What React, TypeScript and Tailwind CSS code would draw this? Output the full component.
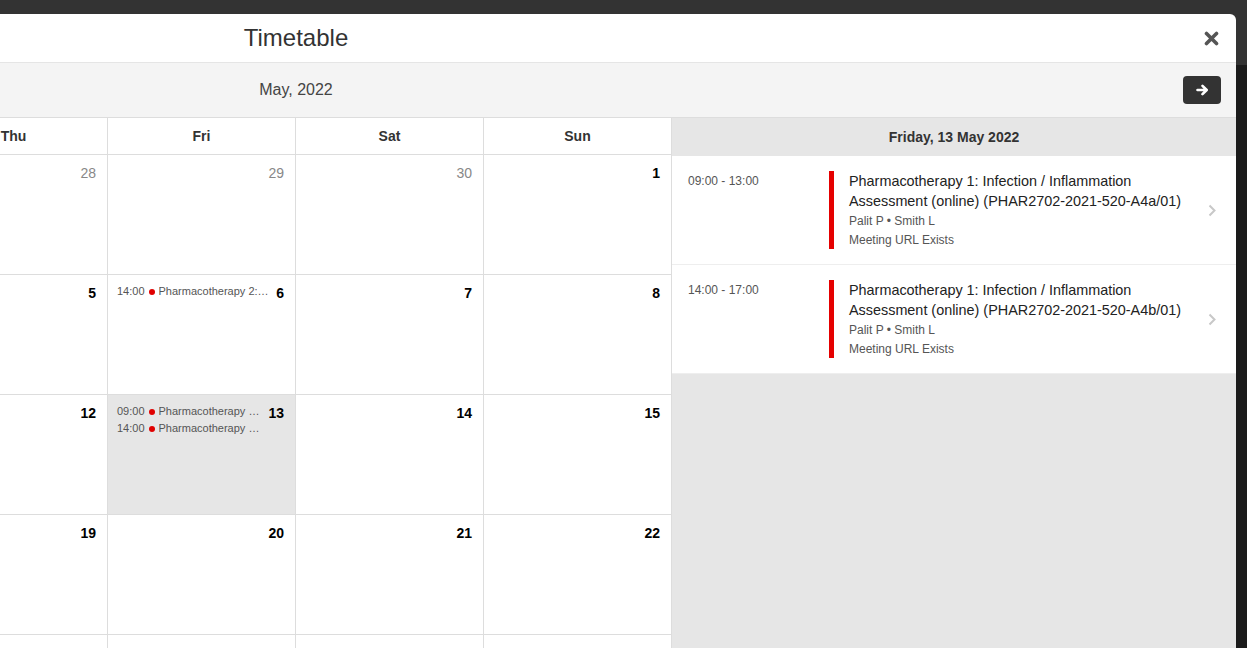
import React from "react";

type Ev = { t: string; name: string };
type Day = { d: number; other?: boolean; sel?: boolean; events?: Ev[] };

const DAYS = ["Mon", "Tue", "Wed", "Thu", "Fri", "Sat", "Sun"];

const ev2: Ev = { t: "14:00", name: "Pharmacotherapy 2: Cardiovascular" };
const evA: Ev = { t: "09:00", name: "Pharmacotherapy 1: Infection / Inflammation" };
const evB: Ev = { t: "14:00", name: "Pharmacotherapy 1: Infection / Inflammation" };

const WEEKS: Day[][] = [
  [{ d: 25, other: true }, { d: 26, other: true }, { d: 27, other: true }, { d: 28, other: true }, { d: 29, other: true }, { d: 30, other: true }, { d: 1 }],
  [{ d: 2 }, { d: 3 }, { d: 4 }, { d: 5 }, { d: 6, events: [ev2] }, { d: 7 }, { d: 8 }],
  [{ d: 9 }, { d: 10 }, { d: 11 }, { d: 12 }, { d: 13, sel: true, events: [evA, evB] }, { d: 14 }, { d: 15 }],
  [{ d: 16 }, { d: 17 }, { d: 18 }, { d: 19 }, { d: 20 }, { d: 21 }, { d: 22 }],
  [{ d: 23 }, { d: 24 }, { d: 25 }, { d: 26 }, { d: 27 }, { d: 28 }, { d: 29 }],
];

const DETAILS = [
  { time: "09:00 - 13:00", code: "PHAR2702-2021-520-A4a/01" },
  { time: "14:00 - 17:00", code: "PHAR2702-2021-520-A4b/01" },
];

function Cell({ day }: { day: Day }) {
  return (
    <div
      className={`h-[120px] border-r border-b border-[#dddddd] flex gap-[6px] pl-[9px] pr-[11px] pt-[8px] ${
        day.sel ? "bg-[#e6e6e6]" : "bg-white"
      }`}
    >
      <div className="flex-1 min-w-0 flex flex-col">
        {(day.events || []).map((e, i) => (
          <div key={i} className="flex items-center text-[11px] leading-[17px] text-[#555] min-w-0">
            <span className="shrink-0">{e.t}</span>
            <span className="shrink-0 w-[6px] h-[6px] rounded-full bg-[#e00000] mx-[4px]" />
            <span className="truncate">{e.name}</span>
          </div>
        ))}
      </div>
      <div
        className={`shrink-0 text-[14px] leading-[18px] mt-[1px] ${
          day.other ? "text-[#888] font-normal" : "text-black font-bold"
        }`}
      >
        {day.d}
      </div>
    </div>
  );
}

export default function App() {
  return (
    <div className="h-[648px] w-[1247px] overflow-hidden bg-[linear-gradient(#333333_65px,#1b1b1b_65px)] pt-[14px] font-['Liberation_Sans',Arial,sans-serif]">
      <div className="w-[1236px] h-[634px] overflow-hidden rounded-tr-[6px] bg-white">
        <div className="-ml-[644px] w-[1880px]">
          {/* Header */}
          <div className="h-[49px] border-b border-[#e5e5e5] grid grid-cols-[1fr_auto_1fr] items-center">
            <div />
            <div className="text-[24px] leading-[28px] text-[#333]">Timetable</div>
            <div className="flex justify-end pr-[17px]">
              <svg width="15" height="15" viewBox="0 0 15 15">
                <path d="M2.5 2.5L12.5 12.5M12.5 2.5L2.5 12.5" stroke="#555" strokeWidth="3.6" strokeLinecap="round" />
              </svg>
            </div>
          </div>
          {/* Month bar */}
          <div className="h-[55px] bg-[#f4f4f4] border-b border-[#dddddd] grid grid-cols-[1fr_auto_1fr] items-center">
            <div />
            <div className="text-[16px] text-[#444]">May, 2022</div>
            <div className="flex justify-end pr-[15px]">
              <div className="w-[38px] h-[28px] rounded-[4px] bg-[#333] flex items-center justify-center">
                <svg width="13" height="12" viewBox="0 0 13 12">
                  <path d="M1.5 6H10.5M6.5 1.8L10.7 6L6.5 10.2" stroke="#fff" strokeWidth="2.6" strokeLinecap="round" strokeLinejoin="round" fill="none" />
                </svg>
              </div>
            </div>
          </div>
          {/* Body */}
          <div className="flex">
            <div className="w-[1316px] shrink-0">
              <div className="grid grid-cols-7">
                {DAYS.map((d) => (
                  <div key={d} className="h-[37px] border-r border-b border-[#dddddd] flex items-center justify-center text-[14px] font-bold text-[#333]">
                    {d}
                  </div>
                ))}
              </div>
              {WEEKS.map((w, wi) => (
                <div key={wi} className="grid grid-cols-7">
                  {w.map((day, di) => (
                    <Cell key={di} day={day} />
                  ))}
                </div>
              ))}
            </div>
            <div className="w-[564px] shrink-0 bg-[#e6e6e6] h-[640px]">
              <div className="h-[38px] flex items-center justify-center text-[14px] font-bold text-[#333]">
                Friday, 13 May 2022
              </div>
              {DETAILS.map((d, i) => (
                <div key={i} className="bg-white border-b border-[#eeeeee] flex items-stretch py-[15px]">
                  <div className="w-[157px] shrink-0 pl-[16px] text-[12px] leading-[20px] text-[#555]">{d.time}</div>
                  <div className="w-[5px] shrink-0 bg-[#e50000]" />
                  <div className="flex-1 min-w-0 pl-[15px]">
                    <div className="text-[14.4px] leading-[20px] text-[#222]">
                      Pharmacotherapy 1: Infection / Inflammation Assessment (online) ({d.code})
                    </div>
                    <div className="text-[12px] leading-[20px] text-[#555]">Palit P • Smith L</div>
                    <div className="text-[12px] leading-[18px] text-[#555]">Meeting URL Exists</div>
                  </div>
                  <div className="w-[41px] shrink-0 flex items-center justify-end pr-[20px]">
                    <svg width="8" height="13" viewBox="0 0 8 13">
                      <path d="M1.5 1.5L6.5 6.5L1.5 11.5" stroke="#c8c8c8" strokeWidth="2" fill="none" />
                    </svg>
                  </div>
                </div>
              ))}
            </div>
          </div>
        </div>
      </div>
    </div>
  );
}
